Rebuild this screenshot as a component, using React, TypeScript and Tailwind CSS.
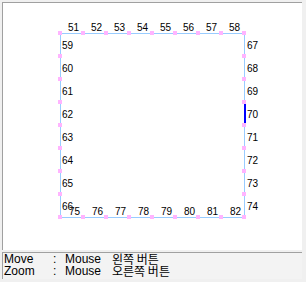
const STEP = 23;
const X0 = 60;
const Y0 = 33;
const xs = Array.from({ length: 9 }, (_, i) => X0 + i * STEP);
const ys = Array.from({ length: 9 }, (_, i) => Y0 + i * STEP);
const X1 = xs[8];
const Y1 = ys[8];

function Diagram() {
  return (
    <svg
      width={299}
      height={247}
      viewBox="3 3 299 247"
      className="block font-['Liberation_Sans',Arial,sans-serif] text-[10px]"
    >
      {/* frame */}
      <rect x={X0 + 0.5} y={Y0 + 0.5} width={X1 - X0} height={Y1 - Y0} fill="none" stroke="#99ccff" />
      {/* selected edge */}
      <rect x={X1} y={ys[3]} width={2} height={STEP} fill="#0000ff" />

      {/* top labels 51-58 */}
      {xs.slice(0, 8).map((_, i) => (
        <text key={"t" + i} x={xs[i + 1] - 4} y={31} textAnchor="end" fill="#000">
          {51 + i}
        </text>
      ))}
      {/* left labels 59-66 */}
      {ys.slice(0, 8).map((y, i) => (
        <text key={"l" + i} x={62} y={y + 16} fill="#000">
          {59 + i}
        </text>
      ))}
      {/* right labels 67-74 */}
      {ys.slice(0, 8).map((y, i) => (
        <text key={"r" + i} x={X1 + 3} y={y + 16} fill="#000">
          {67 + i}
        </text>
      ))}
      {/* bottom labels 75-82 */}
      {xs.slice(0, 8).map((_, i) => (
        <text key={"b" + i} x={xs[i + 1] - 3} y={215} textAnchor="end" fill="#000">
          {75 + i}
        </text>
      ))}

      {/* handles */}
      {xs.map((x) => (
        <g key={"hx" + x}>
          <rect x={x - 2} y={Y0 - 2} width={4} height={4} fill="#ffb4ff" />
          <rect x={x - 2} y={Y1 - 2} width={4} height={4} fill="#ffb4ff" />
        </g>
      ))}
      {ys.slice(1, 8).map((y) => (
        <g key={"hy" + y}>
          <rect x={X0 - 2} y={y - 2} width={4} height={4} fill="#ffb4ff" />
          <rect x={X1 - 2} y={y - 2} width={4} height={4} fill="#ffb4ff" />
        </g>
      ))}
    </svg>
  );
}

export default function App() {
  return (
    <div className="w-[306px] h-[282px] bg-[#f0f0f0] pt-[2px] pl-[2px] font-['Liberation_Sans','Noto_Sans_CJK_KR',sans-serif] text-black">
      <div className="w-[300px] h-[248px] bg-white border-t border-l border-[#a0a0a0]">
        <Diagram />
      </div>

      <div className="mt-[2px] w-[300px] h-[27px] border-t border-l border-[#a0a0a0] bg-[#f3f3f3] pl-[1px] text-[12px] leading-[12px]">
        <div className="flex">
          <span className="w-[49px]">Move</span>
          <span className="w-[12px]">:</span>
          <span>Mouse</span>
          <span className="ml-[11px] font-['Noto_Sans_CJK_KR',sans-serif]">왼쪽 버튼</span>
        </div>
        <div className="flex">
          <span className="w-[49px]">Zoom</span>
          <span className="w-[12px]">:</span>
          <span>Mouse</span>
          <span className="ml-[11px] font-['Noto_Sans_CJK_KR',sans-serif]">오른쪽 버튼</span>
        </div>
      </div>
    </div>
  );
}
